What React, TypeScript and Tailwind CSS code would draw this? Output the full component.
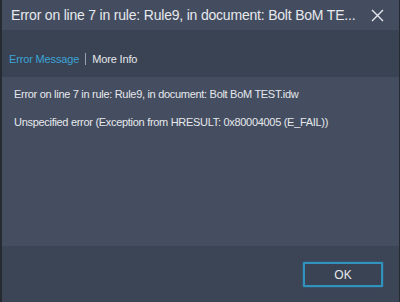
export default function App() {
  return (
    <div
      className="flex h-[302px] w-[400px] flex-col border-l-2 border-r border-[#262a31] bg-[#3c4555] text-[#e6e8ec]"
      style={{ fontFamily: '"Liberation Sans", Arial, sans-serif' }}
    >
      <div className="flex h-[30px] shrink-0 items-center justify-between bg-[#444d60] pl-[9px] pr-[15px]">
        <span className="whitespace-nowrap text-[14px] tracking-[-0.2px]">
          Error on line 7 in rule: Rule9, in document: Bolt BoM TE...
        </span>
        <svg width="13" height="13" viewBox="0 0 13 13" className="shrink-0">
          <path d="M1 1 L12 12 M12 1 L1 12" stroke="#e6e8ec" strokeWidth="1.4" />
        </svg>
      </div>
      <div className="flex h-[47px] shrink-0 items-center bg-[#3a4353] pl-[7px] pt-[11px] text-[11px] tracking-[-0.15px]">
        <span className="text-[#3ba3d6]">Error Message</span>
        <span className="mx-[6px] h-[12px] w-px bg-[#9aa0aa]" />
        <span>More Info</span>
      </div>
      <div className="flex h-[169px] shrink-0 flex-col gap-[11px] bg-[#454e61] px-[12px] pt-[9px] text-[11px] tracking-[-0.3px]">
        <div>Error on line 7 in rule: Rule9, in document: Bolt BoM TEST.idw</div>
        <div>Unspecified error (Exception from HRESULT: 0x80004005 (E_FAIL))</div>
      </div>
      <div className="flex flex-1 items-start justify-end pr-[16px] pt-[16px]">
        <button className="h-[25px] w-[80px] rounded-[1px] border-2 border-[#3192bd] bg-[#3a4353] text-[12px] text-[#e6e8ec] shadow-[0_0_2px_#2d7fa6]">
          OK
        </button>
      </div>
    </div>
  );
}
